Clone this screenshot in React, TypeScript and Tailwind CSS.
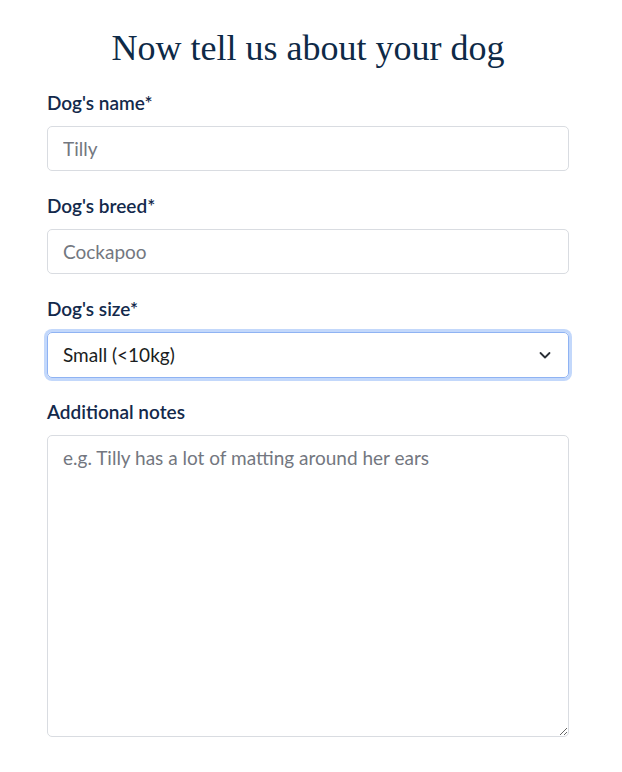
import React from "react";

export default function App() {
  const labelCls = "block text-[19px] font-semibold leading-[24px] text-[#13294b]";
  const inputCls =
    "mt-[11px] h-[45px] w-full rounded-[5px] border border-[#d9dce1] px-[15px] text-[19px] text-[#1f2937] outline-none placeholder:text-[#737780]";
  return (
    <div className="min-h-[772px] w-full bg-white" style={{ fontFamily: "Lato, 'Noto Sans', sans-serif" }}>
      <div className="ml-[47px] w-[522px] pt-[26px]">
        <h1
          className="text-center text-[36px] leading-[44px] text-[#0e2a47]"
          style={{ fontFamily: "'Liberation Serif', 'DejaVu Serif', serif" }}
        >
          Now tell us about your dog
        </h1>
        <form className="mt-[21px] flex flex-col">
          <label className={labelCls}>Dog's name*</label>
          <input className={inputCls} placeholder="Tilly" />
          <label className={"mt-[23px] " + labelCls}>Dog's breed*</label>
          <input className={inputCls} placeholder="Cockapoo" />
          <label className={"mt-[23px] " + labelCls}>Dog's size*</label>
          <div className="relative mt-[11px]">
            <div className="flex h-[46px] w-full items-center justify-between rounded-[5px] border border-[#8fb3f3] px-[15px] text-[19px] text-[#1a1d21] ring-[3px] ring-[#c3d8fb]">
              <span>Small (&lt;10kg)</span>
              <svg width="14" height="14" viewBox="0 0 14 14" fill="none" className="mr-[1px]">
                <path d="M2.5 5 L7 9.5 L11.5 5" stroke="#2a2f36" strokeWidth="1.8" strokeLinecap="round" strokeLinejoin="round" />
              </svg>
            </div>
          </div>
          <label className={"mt-[22px] " + labelCls}>Additional notes</label>
          <textarea
            className="mt-[11px] h-[302px] w-full rounded-[5px] border border-[#d9dce1] px-[15px] py-[10px] text-[19px] leading-[24px] text-[#1f2937] outline-none placeholder:text-[#737780]"
            placeholder="e.g. Tilly has a lot of matting around her ears"
          />
        </form>
      </div>
    </div>
  );
}
